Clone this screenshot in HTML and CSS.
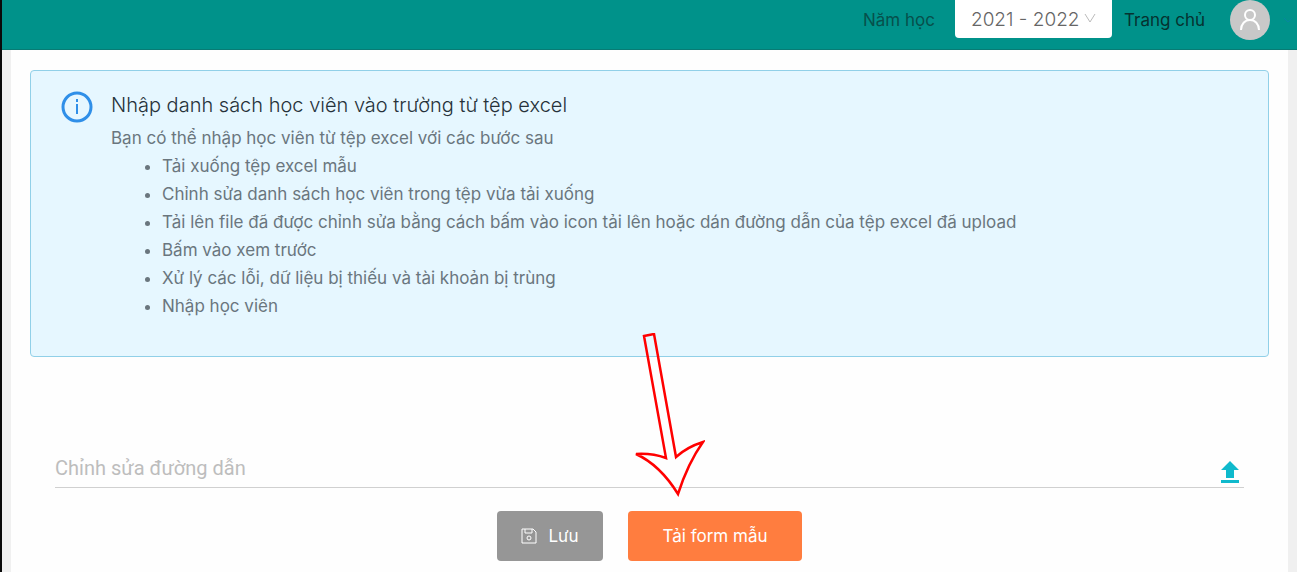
FILE: index.html
```html
<!DOCTYPE html>
<html lang="vi">
<head>
  <meta charset="UTF-8">
  <meta name="viewport" content="width=device-width, initial-scale=1">
  <title>Nhập danh sách học viên</title>
  <link rel="stylesheet" href="styles.css">
</head>

<body>

<header class="topbar">
  <label class="year-label" for="year">Năm học</label>
  <div class="year-select">
    <select name="year" id="year">
      <option value="2021">2021 - 2022</option>
    </select>
    <svg class="chevron" viewBox="0 0 12 12" aria-hidden="true">
      <path d="M1 2l5 8 5-8"/>
    </svg>
  </div>
  <a class="home-link" href="#">Trang chủ</a>
  <button type="button" class="avatar" aria-label="Tài khoản">
    <svg viewBox="0 0 40 40" aria-hidden="true">
      <circle cx="20" cy="15" r="5"/>
      <path d="M11 30c0-6 4-10 9-10s9 4 9 10"/>
    </svg>
  </button>
  <svg class="account-arrow" viewBox="0 0 10 8" aria-hidden="true">
    <path d="M1 2l4 4 4-4"/>
  </svg>
</header>

<main class="page">
  <!-- Import instructions -->
  <section class="notice">
    <svg class="info-icon" viewBox="0 0 32 32" aria-hidden="true">
      <circle cx="16" cy="16" r="14"/>
      <path d="M16 13v10"/>
      <path d="M16 8v3"/>
    </svg>
    <div class="notice-body">
      <h1>Nhập danh sách học viên vào trường từ tệp excel</h1>
      <p>Bạn có thể nhập học viên từ tệp excel với các bước sau</p>
      <ul>
        <li>Tải xuống tệp excel mẫu</li>
        <li>Chỉnh sửa danh sách học viên trong tệp vừa tải xuống</li>
        <li>Tải lên file đã được chỉnh sửa bằng cách bấm vào icon tải lên hoặc dán đường dẫn của tệp excel đã upload</li>
        <li>Bấm vào xem trước</li>
        <li>Xử lý các lỗi, dữ liệu bị thiếu và tài khoản bị trùng</li>
        <li>Nhập học viên</li>
      </ul>
    </div>
  </section>

  <form class="upload-form" action="#">
    <div class="path-field">
      <input type="text" name="path" id="path" placeholder="Chỉnh sửa đường dẫn" aria-label="Chỉnh sửa đường dẫn">
      <button type="button" class="upload-btn" aria-label="Tải lên">
        <svg viewBox="0 0 18 22" aria-hidden="true">
          <path d="M9 0l9 9h-5v8H5V9H0zM0 19h18v3H0z"/>
        </svg>
      </button>
    </div>

    <div class="actions">
      <button type="submit" class="btn btn-save">
        <svg class="save-icon" viewBox="0 0 16 16" aria-hidden="true">
          <path d="M1 1h11l3 3v11H1z"/>
          <path d="M4 1v4h7V1"/>
          <circle cx="8" cy="10" r="2"/>
        </svg>
        Lưu
      </button>
      <div class="template">
        <button type="button" class="btn btn-template">Tải form mẫu</button>
        <svg class="pointer" viewBox="0 0 72 164" aria-hidden="true">
          <path d="M11 3l10-2 22 123q11-10 27-15-15 21-25 52Q27 132 3 121q16-1 30 4z"/>
        </svg>
      </div>
    </div>
  </form>
</main>

</body>
</html>
```

FILE: styles.css
```css
* {
  box-sizing: border-box;
}

body {
  font-family: Inter, "Liberation Sans", sans-serif;
  font-size: 17px;
  font-weight: 400;
  color: #6a767e;
  background-color: #f0f0f0;
  margin: 0;
  min-height: 100vh;
  border-left: 2px solid #0a0a0a;
  display: flex;
  flex-direction: column;
}

button, select, input {
  font: inherit;
}

button {
  border: none;
  cursor: pointer;
}

svg {
  display: block;
  fill: none;
}

/* Top bar */
.topbar {
  height: 50px;
  padding-bottom: 9px;
  background-color: #00928a;
  border-bottom: 1px solid #087b74;
  display: flex;
  justify-content: flex-end;
  align-items: center;
}

.year-label {
  color: #07504c;
  margin-right: 20px;
}

.year-select {
  position: relative;
  align-self: flex-start;
}

.year-select select {
  appearance: none;
  width: 157px;
  height: 38px;
  padding: 0 16px;
  border: none;
  border-radius: 0 0 4px 4px;
  background-color: #fff;
  font-size: 19px;
  font-weight: 300;
  color: #666;
}

.chevron {
  position: absolute;
  right: 16px;
  top: 12px;
  width: 12px;
  height: 12px;
  stroke: #bbb;
}

.home-link {
  color: #063330;
  text-decoration: none;
  margin: 0 25px 0 12px;
}

.avatar {
  width: 40px;
  height: 40px;
  padding: 0;
  border-radius: 50%;
  background-color: #c8c8c8;
}

.avatar svg {
  stroke: #fff;
  stroke-width: 2;
}

.account-arrow {
  width: 10px;
  height: 8px;
  margin: 0 4px 0 13px;
  stroke: #0785a0;
}

/* Content */
.page {
  flex: 1;
  margin: 0 9px;
  padding: 20px 19px 0;
  background-color: #fefefe;
}

.notice {
  display: flex;
  gap: 18px;
  padding: 20px 30px 36px;
  background-color: #e6f7ff;
  border: 1px solid #91d0e8;
  border-radius: 4px;
}

.info-icon {
  flex: none;
  width: 32px;
  height: 32px;
  stroke: #2f8fe8;
  stroke-width: 3;
}

.info-icon path {
  stroke-width: 2;
}

.notice h1 {
  margin: 0 0 5px;
  font-size: 20px;
  font-weight: 300;
  line-height: 28px;
  color: #26323a;
}

.notice p,
.notice ul {
  margin: 0;
  line-height: 28px;
}

.notice ul {
  padding-left: 51px;
}

/* Link field */
.upload-form {
  padding: 91px 25px 0;
}

.path-field {
  display: flex;
  align-items: center;
  height: 40px;
  border-bottom: 1px solid #d0d0d0;
}

.path-field input {
  flex: 1;
  min-width: 0;
  padding: 0;
  border: none;
  outline: none;
  background: none;
  font-family: Roboto, sans-serif;
  font-size: 20px;
}

.path-field input::placeholder {
  color: #bdbdbd;
}

.upload-btn {
  width: 18px;
  margin: 8px 5px 0 0;
  padding: 0;
  background: none;
}

.upload-btn svg {
  fill: #0fb9cc;
}

/* Buttons */
.actions {
  display: flex;
  justify-content: center;
  gap: 25px;
  padding-top: 23px;
}

.btn {
  display: flex;
  align-items: center;
  justify-content: center;
  gap: 11px;
  height: 50px;
  border-radius: 4px;
  color: #fff;
}

.btn-save {
  width: 106px;
  background-color: #969696;
}

.save-icon {
  width: 16px;
  height: 16px;
  stroke: #fff;
}

.template {
  position: relative;
}

.btn-template {
  width: 174px;
  background-color: #ff7d3f;
}

/* Red arrow over the template button */
.pointer {
  position: absolute;
  left: 5px;
  bottom: 64px;
  width: 72px;
  height: 164px;
  stroke: #f00;
  stroke-width: 2.5;
}
```
